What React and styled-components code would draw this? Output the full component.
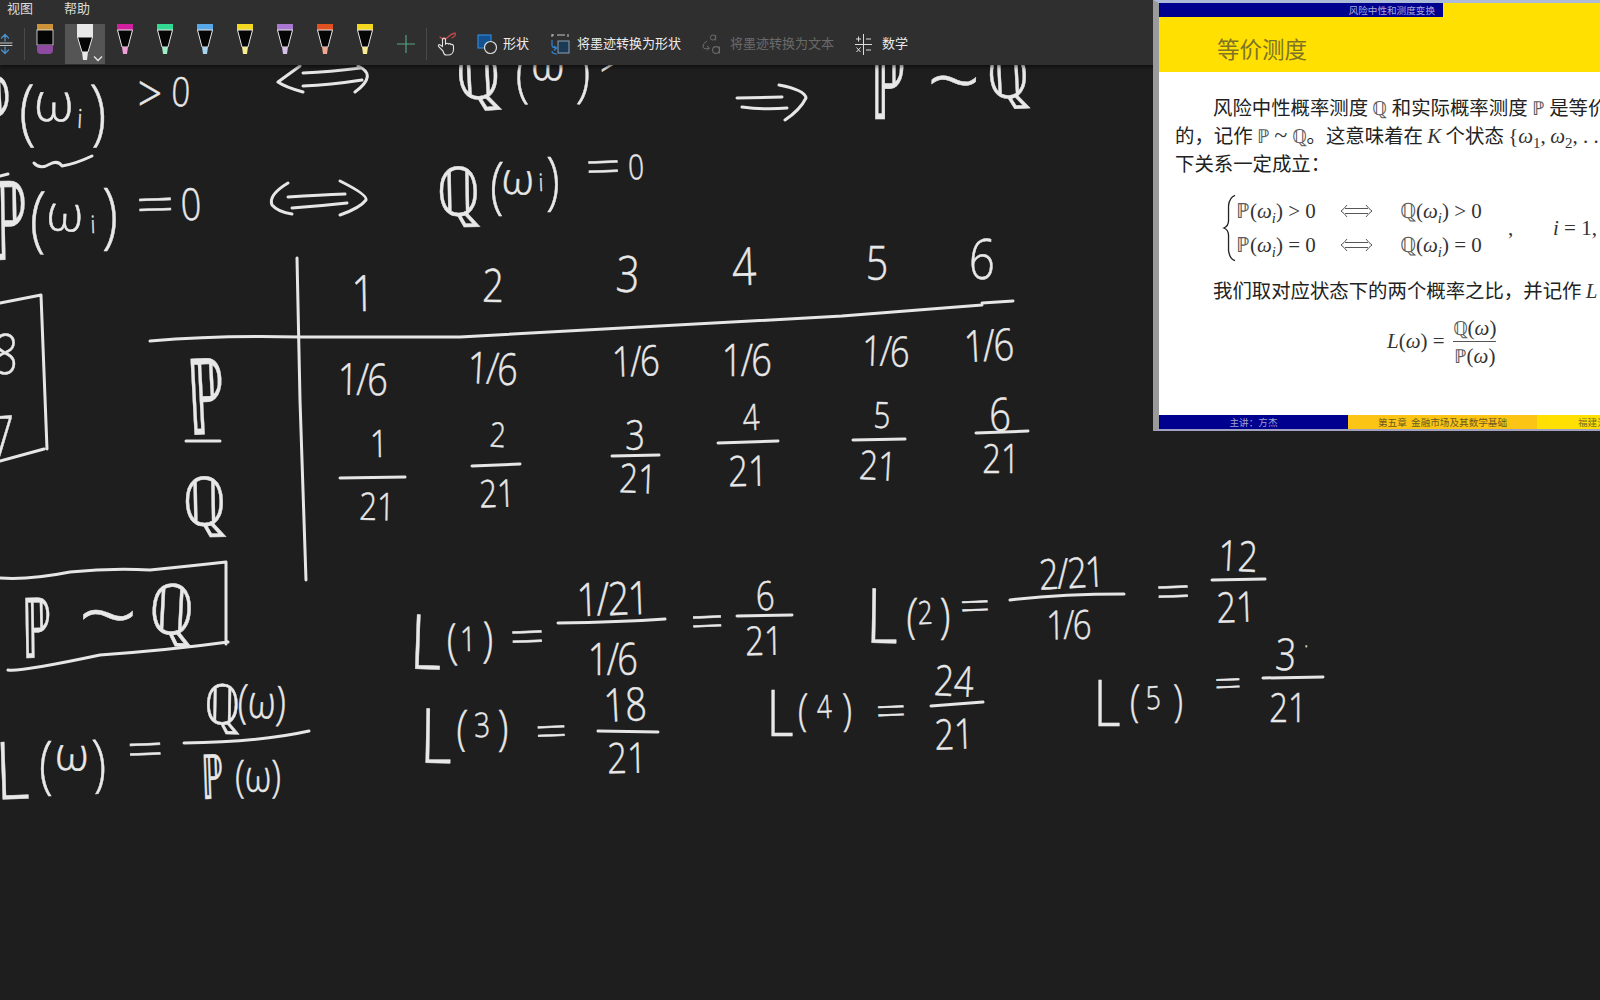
import React from 'react'
import styled, {createGlobalStyle} from 'styled-components'

const GlobalStyle = createGlobalStyle`
    html, body {
        margin: 0;
        padding: 0;
        background: #1e1e1e;
    }
`

const Page = styled.div`
    position: relative;
    width: 1600px;
    height: 1000px;
    overflow: hidden;
    display: flex;
    flex-direction: column;
    background: #1e1e1e;
    font-family: "Noto Sans CJK SC", "Liberation Sans", sans-serif;
`

/* ---------- ribbon ---------- */

const Ribbon = styled.div`
    position: relative;
    z-index: 2;
    height: 65px;
    flex: none;
    background: #2f2f2f;
    box-shadow: 0 2px 4px rgba(0, 0, 0, 0.55);
`

const MenuRow = styled.div`
    display: flex;
    height: 24px;
    padding-left: 7px;
    gap: 31px;
    font-size: 13px;
    line-height: 16px;
    color: #dcdcdc;
`

const ToolRow = styled.div`
    display: flex;
    align-items: center;
    height: 40px;
`

const Slot = styled.div`
    position: relative;
    flex: none;
    width: 40px;
    height: 40px;
    display: flex;
    align-items: flex-start;
    justify-content: center;
    background: ${p => (p.$active ? '#555555' : 'transparent')};
`

const RulerSlot = styled.div`
    flex: none;
    width: 24px;
    height: 32px;
    border-right: 1px solid #4a4a4a;
    display: flex;
    align-items: center;
`

const PlusSlot = styled.div`
    flex: none;
    width: 41px;
    height: 32px;
    border-right: 1px solid #4a4a4a;
    display: flex;
    align-items: center;
    justify-content: center;
`

const HandSlot = styled.div`
    flex: none;
    width: 40px;
    display: flex;
    justify-content: center;
    margin-right: 10px;
`

const ToolButton = styled.div`
    flex: none;
    display: flex;
    align-items: center;
    gap: ${p => p.$gap || 6}px;
    margin-right: ${p => p.$after || 0}px;
    font-size: 13px;
    color: ${p => (p.$off ? '#6a6a6a' : '#ececec')};
    white-space: nowrap;
`

const ToolLabel = styled.span`
    margin-top: -3px;
`

const Chevron = styled.svg`
    position: absolute;
    right: 2px;
    bottom: 2px;
`

function Pen({cap, tip}) {
    return (
        <svg width="18" height="32" viewBox="0 0 18 32">
            <rect x="1" y="0" width="16" height="6" fill={cap} />
            <path d="M1.5 6 L6 23 H12 L16.5 6 Z" fill="#050505" stroke="#e8e8e8" strokeWidth="1" />
            <path d="M6 23 L7 30 H11 L12 23 Z" fill={tip} />
        </svg>
    )
}

const PENS = [
    ['#d020a0', '#f0a0d8'],
    ['#30d890', '#a0ecc8'],
    ['#58a8e8', '#a8d4f0'],
    ['#f4d820', '#f8ec90'],
    ['#a878d0', '#d4c0e8'],
    ['#e05020', '#f0a890'],
    ['#f4d820', '#f8ec90'],
]

function Toolbar() {
    return (
        <Ribbon>
            <MenuRow>
                <span>视图</span>
                <span>帮助</span>
            </MenuRow>
            <ToolRow>
                <RulerSlot>
                    <svg width="14" height="24" viewBox="0 0 14 24" fill="none" strokeLinecap="round">
                        <path d="M5 3 V9 M1.5 6 L5 2.5 L8.5 6 M5 15 V21 M1.5 18 L5 21.5 L8.5 18" stroke="#4a8fc8" strokeWidth="1.3" />
                        <path d="M0 11 H12 M0 13.5 H12" stroke="#c8c8c8" strokeWidth="1" />
                    </svg>
                </RulerSlot>
                <Slot>
                    <svg width="18" height="31" viewBox="0 0 18 31">
                        <rect x="1" y="0" width="16" height="6" fill="#cc9238" />
                        <rect x="1" y="6" width="16" height="15" fill="#050505" stroke="#e8e8e8" strokeWidth="0.8" />
                        <path d="M1 21 H17 V26 Q17 30 13 30 H5 Q1 30 1 26 Z" fill="#8e4a9e" />
                    </svg>
                </Slot>
                <Slot $active>
                    <svg width="18" height="37" viewBox="0 0 18 37">
                        <rect x="1" y="0" width="16" height="13" fill="#e8e8e8" />
                        <path d="M1.5 13 L6 28 H12 L16.5 13 Z" fill="#050505" stroke="#e8e8e8" strokeWidth="1" />
                        <path d="M6 28 L7 36 H11 L12 28 Z" fill="#e8e8e8" />
                    </svg>
                    <Chevron width="10" height="7" viewBox="0 0 10 7" fill="none">
                        <path d="M1 1.5 L5 5.5 L9 1.5" stroke="#e8e8e8" strokeWidth="1.3" />
                    </Chevron>
                </Slot>
                {PENS.map(([cap, tip], i) => (
                    <Slot key={i}>
                        <Pen cap={cap} tip={tip} />
                    </Slot>
                ))}
                <PlusSlot>
                    <svg width="18" height="18" viewBox="0 0 18 18">
                        <path d="M9 0 V18 M0 9 H18" stroke="#58a888" strokeWidth="1.1" />
                    </svg>
                </PlusSlot>
                <HandSlot>
                    <svg width="22" height="24" viewBox="0 0 22 24" fill="none" strokeLinecap="round">
                        <path d="M4 5 Q8 9 12 5 Q15 2 19 1 Q21 3 16 6" stroke="#c04848" strokeWidth="1.3" />
                        <path d="M7 19 L3 15 Q1.5 13 3.5 12.5 L6.5 14.5 V7 Q8 5 9.5 7 V12 Q11 10.5 12.5 12 Q14 11 15 12.5 Q17 12 17.5 14 V18 Q17 23 12 23 H10 Q8 23 7 19 Z" stroke="#e4e4e4" strokeWidth="1.1" />
                    </svg>
                </HandSlot>
                <ToolButton $after={22} $gap={5}>
                    <svg width="21" height="21" viewBox="0 0 21 21">
                        <rect x="1" y="1" width="13" height="13" fill="#14528f" stroke="#2f86d6" strokeWidth="1.2" />
                        <circle cx="13.5" cy="13.5" r="6" fill="#2f2f2f" stroke="#dcdcdc" strokeWidth="1.2" />
                    </svg>
                    <ToolLabel>形状</ToolLabel>
                </ToolButton>
                <ToolButton $after={21} $gap={7}>
                    <svg width="19" height="22" viewBox="0 0 19 22" fill="none">
                        <path d="M1 2 H3 M1 1 V4 M6 2 H14 M17 1 V4" stroke="#c8c8c8" strokeWidth="1" />
                        <rect x="7" y="8" width="11" height="12" fill="#1d3a55" stroke="#8aa0b4" strokeWidth="1" />
                        <path d="M1 7 V12 Q1 15 5 15 M3 13 L5.5 15 L3 17.5 M1 18 Q1 21 6 21" stroke="#2f86d6" strokeWidth="1.2" />
                    </svg>
                    <ToolLabel>将墨迹转换为形状</ToolLabel>
                </ToolButton>
                <ToolButton $off $after={21} $gap={8}>
                    <svg width="20" height="22" viewBox="0 0 20 22" fill="none">
                        <path d="M5 8 Q0 11 1 14 Q2 17 7 15 M5 13 L7.5 15 L5 17.5" stroke="#6a6a6a" strokeWidth="1" />
                        <circle cx="11" cy="4.5" r="2.6" stroke="#6a6a6a" strokeWidth="1" />
                        <path d="M13.6 2 V7.5" stroke="#6a6a6a" strokeWidth="1" />
                        <circle cx="14" cy="17" r="3.4" stroke="#6a6a6a" strokeWidth="1.1" />
                        <path d="M17.4 13.5 V20.5" stroke="#6a6a6a" strokeWidth="1.1" />
                    </svg>
                    <ToolLabel>将墨迹转换为文本</ToolLabel>
                </ToolButton>
                <ToolButton $gap={10}>
                    <svg width="17" height="21" viewBox="0 0 17 21" fill="none">
                        <path d="M8.5 0 V21 M0 10.5 H17" stroke="#dcdcdc" strokeWidth="1" />
                        <path d="M1 5 H6 M3.5 2.5 V7.5 M11 5 H16 M1.5 13.5 L5.5 18 M5.5 13.5 L1.5 18 M11 16 H16" stroke="#dcdcdc" strokeWidth="1" />
                    </svg>
                    <ToolLabel>数学</ToolLabel>
                </ToolButton>
            </ToolRow>
        </Ribbon>
    )
}

/* ---------- whiteboard ---------- */

const Board = styled.div`
    position: relative;
    flex: 1;
    overflow: hidden;
`

/* the canvas keeps page coordinates, the ribbon covers its first 65px */
const Canvas = styled.div`
    position: absolute;
    left: 0;
    top: -65px;
    width: 1600px;
    height: 1000px;
`

const Strokes = styled.svg`
    position: absolute;
    inset: 0;
    fill: none;
    stroke: #e6e6e6;
    stroke-width: 3;
    stroke-linecap: round;
    stroke-linejoin: round;
`

const Ink = styled.span`
    position: absolute;
    left: ${p => p.$x}px;
    top: ${p => p.$y}px;
    transform: translate(-50%, -50%) rotate(${p => p.$r}deg) scaleX(${p => p.$sx});
    font-family: "Open Sans", "DejaVu Sans", sans-serif;
    font-weight: 300;
    -webkit-text-stroke: 0.5px #e8e8e8;
    font-size: ${p => p.$s}px;
    letter-spacing: ${p => p.$track || 0}px;
    line-height: 1;
    color: #e8e8e8;
    white-space: nowrap;
`

const STROKES = [
    // table
    'M297 258 L300 400 L306 580',
    'M150 341 Q220 335 300 337 L460 337 L842 316 M842 316 L982 305 M982 303 L1013 301',
    'M186 441 H220',
    'M340 478 L405 477',
    'M472 466 L520 464',
    'M612 456 L659 455',
    'M718 443 L778 441',
    'M853 440 L905 439',
    'M976 433 L1028 431',
    // boxes
    'M0 303 L41 295 L47 449 M0 461 L44 449',
    'M0 578 Q30 580 70 572 Q110 568 150 570 Q190 566 226 562 L226 644 M8 670 Q20 672 100 655 Q170 650 228 642',
    // marks under the first line
    'M34 163 Q40 170 50 164 Q58 160 62 166 Q75 164 92 156',
    'M0 176 L8 174',
    // arrows
    'M300 66 L278 82 Q285 87 303 92 M303 73 Q330 72 360 68 M303 86 Q330 85 362 80 M358 66 Q378 75 355 92',
    'M288 183 Q268 195 272 205 Q278 212 292 214 M288 197 Q320 195 345 194 M292 208 Q320 206 347 203 M340 181 Q368 195 366 200 Q360 208 340 215',
    'M737 98 L782 97 M742 107 Q765 110 787 108 M779 85 Q805 90 806 98 Q800 110 785 120',
    // fraction bars
    'M184 743 Q260 742 309 731',
    'M558 623 Q620 622 665 619',
    'M737 616 L792 615',
    'M598 731 L658 732',
    'M1010 600 Q1060 594 1124 594',
    'M1212 580 L1265 579',
    'M931 706 L983 702',
    'M1263 678 L1323 677',
]

const INK = [
    // first line
    ['ℙ', -6, 108, 100], ['(', 27, 108, 72], ['ω', 54, 100, 54], ['i', 80, 118, 26], [')', 98, 108, 72],
    ['>', 150, 92, 52], ['0', 181, 91, 40],
    ['ℚ', 478, 72, 70], ['(', 522, 72, 60], ['ω', 548, 62, 46], [')', 584, 72, 60], ['>', 610, 60, 44],
    ['ℙ', 888, 80, 100], ['~', 954, 78, 86], ['ℚ', 1008, 72, 66],
    // second line
    ['ℙ', 8, 217, 110], ['(', 38, 215, 72], ['ω', 65, 212, 50], ['i', 93, 224, 24], [')', 110, 212, 72],
    ['=', 155, 203, 50], ['0', 191, 203, 44],
    ['ℚ', 458, 190, 68], ['(', 497, 182, 62], ['ω', 518, 177, 44], ['i', 541, 182, 24], [')', 553, 178, 62],
    ['=', 603, 165, 46], ['0', 636, 166, 34],
    // table head
    ['1', 363, 292, 50], ['2', 493, 284, 46], ['3', 628, 273, 50], ['4', 744, 265, 52], ['5', 877, 262, 48], ['6', 982, 257, 56],
    ['ℙ', 206, 393, 106], ['ℚ', 204, 500, 68],
    // table rows
    ['1/6', 362, 378, 44], ['1/6', 492, 367, 44], ['1/6', 635, 360, 42], ['1/6', 746, 359, 44], ['1/6', 885, 350, 42], ['1/6', 988, 344, 44],
    ['1', 379, 442, 38], ['21', 377, 505, 38],
    ['2', 498, 434, 34], ['21', 497, 492, 38],
    ['3', 635, 434, 42], ['21', 638, 478, 40],
    ['4', 751, 417, 36], ['21', 748, 470, 42],
    ['5', 882, 415, 36], ['21', 878, 465, 40],
    ['6', 1000, 413, 46], ['21', 1001, 458, 40],
    // boxed
    ['8', 5, 352, 56], ['7', 2, 434, 56],
    ['ℙ', 37, 626, 84], ['~', 108, 612, 96], ['ℚ', 172, 607, 70],
    // L(w)
    ['L', 12, 768, 80], ['(', 46, 762, 62], ['ω', 72, 752, 46], [')', 99, 760, 62], ['=', 145, 748, 48],
    ['ℚ', 222, 702, 56], ['(ω)', 262, 700, 46], ['ℙ', 212, 775, 62], ['(ω)', 258, 775, 44],
    // L(1)
    ['L', 426, 640, 76], ['(', 452, 640, 48], ['1', 468, 638, 34], [')', 488, 638, 48], ['=', 527, 635, 46],
    ['1/21', 612, 597, 46], ['1/6', 612, 658, 44], ['=', 707, 620, 44], ['6', 765, 595, 40], ['21', 764, 640, 40],
    // L(3)
    ['L', 436, 734, 76], ['(', 462, 726, 48], ['3', 482, 724, 34], [')', 503, 726, 48], ['=', 551, 730, 42],
    ['18', 625, 703, 46], ['21', 627, 757, 42],
    // L(2)
    ['L', 882, 614, 76], ['(', 912, 614, 48], ['2', 925, 612, 32], [')', 945, 614, 48], ['=', 975, 605, 40],
    ['2/21', 1071, 572, 42], ['1/6', 1068, 624, 40], ['=', 1173, 590, 46], ['12', 1238, 555, 42], ['21', 1236, 606, 42],
    // L(4)
    ['L', 780, 712, 64], ['(', 803, 708, 44], ['4', 824, 706, 32], [')', 847, 708, 44], ['=', 891, 710, 40],
    ['24', 954, 680, 42], ['21', 954, 733, 42],
    // L(5)
    ['L', 1107, 702, 64], ['(', 1135, 699, 44], ['5', 1153, 697, 32], [')', 1178, 699, 44], ['=', 1228, 683, 36],
    ['3', 1286, 653, 44], ['.', 1306, 640, 18], ['21', 1288, 707, 40],
]

// how wide each kind of handwritten mark runs against the font
const widthOf = t => {
    if (t === 'ℙ') return 0.55
    if (t === '=') return 1.35
    if (t === 'ω') return 1
    if (t === '~') return 1.1
    return 0.82
}

function Whiteboard() {
    return (
        <Board>
            <Canvas>
                <Strokes width="1600" height="1000" viewBox="0 0 1600 1000">
                    {STROKES.map((d, i) => (
                        <path key={i} d={d} />
                    ))}
                </Strokes>
                {INK.map(([t, x, y, s], i) => (
                    <Ink
                        key={i}
                        $x={x}
                        $y={y}
                        $s={s}
                        $sx={widthOf(t)}
                        $r={t === '=' ? -2 : (i * 37) % 7 - 3}
                        $track={t.includes('/') ? -2 : 0}
                    >
                        {t}
                    </Ink>
                ))}
            </Canvas>
        </Board>
    )
}

/* ---------- floating slide ---------- */

const Slide = styled.div`
    position: absolute;
    z-index: 3;
    top: 0;
    left: 1153px;
    width: 447px;
    height: 431px;
    box-sizing: border-box;
    display: flex;
    flex-direction: column;
    overflow: hidden;
    background: #ffffff;
    border-left: 6px solid #9a9a9a;
    border-top: 3px solid #aebbd8;
    border-bottom: 2px solid #a0a0c0;
`

const SlideTop = styled.div`
    flex: none;
    display: flex;
    height: 14px;
    background: #ffe000;
`

const SectionTab = styled.div`
    width: 284px;
    display: flex;
    justify-content: flex-end;
    padding-right: 8px;
    box-sizing: border-box;
    background: #00008f;
    color: #a8a8d8;
    font-size: 9.6px;
    line-height: 14px;
`

const TitleBand = styled.div`
    flex: none;
    height: 55px;
    padding-left: 58px;
    background: #ffe000;
    color: #7d7328;
    font-size: 22.5px;
    line-height: 62px;
`

const SlideBody = styled.div`
    flex: 1;
    min-height: 0;
    padding: 21px 0 0 16px;
    color: #222222;
    font-size: 19.4px;
    line-height: 28px;
`

const Line = styled.div`
    height: 28px;
    white-space: nowrap;
    text-indent: ${p => (p.$indent ? 38 : 0)}px;
    margin-top: ${p => p.$top || 0}px;
`

const Bb = styled.span`
    font-family: "DejaVu Sans", sans-serif;
    font-size: 1em;
    font-weight: 200;
    color: #5a5a5a;
`

const M = styled.span`
    font-family: "Liberation Serif", serif;
    font-style: ${p => (p.$up ? 'normal' : 'italic')};
    font-size: ${p => p.$s || 21}px;
    color: #333333;
`

const Cases = styled.div`
    display: flex;
    align-items: center;
    margin: 16px 0 0 47px;
    height: 70px;
`

const Brace = styled.svg`
    flex: none;
`

const CaseGrid = styled.div`
    flex: none;
    display: grid;
    grid-template-columns: 104px 60px 108px 45px 60px;
    grid-auto-rows: 34px;
    font-family: "Liberation Serif", serif;
    font-size: 21px;
    line-height: 34px;
    color: #333333;
    white-space: nowrap;
`

const ArrowCell = styled.div`
    display: flex;
    align-items: center;
    height: 34px;
`

const CommaCell = styled.div`
    grid-row: 1 / span 2;
    grid-column: 4;
    line-height: 68px;
`

const IndexCell = styled.div`
    grid-row: 1 / span 2;
    grid-column: 5;
    line-height: 68px;
    font-size: 21px;
`

const Formula = styled.div`
    display: flex;
    align-items: center;
    gap: 8px;
    margin: 11px 0 0 212px;
    height: 52px;
`

const Fraction = styled.div`
    display: flex;
    flex-direction: column;
    align-items: center;
    line-height: 25px;
    & > :first-child {
        border-bottom: 1px solid #555555;
    }
`

const Sub = styled.sub`
    font-size: 0.7em;
    line-height: 0;
`

const Footer = styled.div`
    flex: none;
    display: flex;
    height: 14px;
    font-size: 9.6px;
    line-height: 14px;
    text-align: center;
    white-space: nowrap;
`

const FootCell = styled.div`
    flex: none;
    width: ${p => p.$w}px;
    background: ${p => p.$bg};
    color: ${p => p.$fg};
    padding-left: ${p => p.$pad || 0}px;
    box-sizing: border-box;
    text-align: ${p => (p.$pad ? 'left' : 'center')};
`

const P = ({row, op, zero}) => (
    <div>
        <Bb>{row}</Bb>(<i>ω</i>
        <Sub>
            <i>i</i>
        </Sub>
        ) {op} {zero}
    </div>
)

const Iff = () => (
    <ArrowCell>
        <svg width="33" height="14" viewBox="0 0 33 14" fill="none" stroke="#444444" strokeWidth="0.9">
            <path d="M5 4.5 H28 M5 9.5 H28 M7 1 Q4 5 1 7 Q4 9 7 13 M26 1 Q29 5 32 7 Q29 9 26 13" />
        </svg>
    </ArrowCell>
)

function SlidePanel() {
    return (
        <Slide>
            <SlideTop>
                <SectionTab>风险中性和测度变换</SectionTab>
            </SlideTop>
            <TitleBand>等价测度</TitleBand>
            <SlideBody>
                <Line $indent>
                    风险中性概率测度 <Bb>ℚ</Bb> 和实际概率测度 <Bb>ℙ</Bb> 是等价的
                </Line>
                <Line>
                    的，记作 <Bb>ℙ</Bb> <M $up $s={24}>~</M> <Bb>ℚ</Bb>。这意味着在 <M>K</M> 个状态 <M $up>{'{'}</M>
                    <M>ω</M>
                    <Sub>
                        <M $up $s={15}>1</M>
                    </Sub>
                    <M $up>,</M> <M>ω</M>
                    <Sub>
                        <M $up $s={15}>2</M>
                    </Sub>
                    <M $up>, . . .</M>
                </Line>
                <Line>下关系一定成立：</Line>
                <Cases>
                    <Brace width="14" height="72" viewBox="0 0 15 72" fill="none">
                        <path d="M14 1 Q8 3 7 12 V28 Q7 34 2 36 Q7 38 7 44 V60 Q8 69 14 71" stroke="#222222" strokeWidth="1.4" />
                    </Brace>
                    <CaseGrid>
                        <P row="ℙ" op=">" zero="0" />
                        <Iff />
                        <P row="ℚ" op=">" zero="0" />
                        <CommaCell>,</CommaCell>
                        <IndexCell>
                            <i>i</i> = 1,
                        </IndexCell>
                        <P row="ℙ" op="=" zero="0" />
                        <Iff />
                        <P row="ℚ" op="=" zero="0" />
                    </CaseGrid>
                </Cases>
                <Line $indent $top={13}>
                    我们取对应状态下的两个概率之比，并记作 <M>L</M>
                </Line>
                <Formula>
                    <M>
                        L<M $up>(</M>ω<M $up>) =</M>
                    </M>
                    <Fraction>
                        <div>
                            <Bb>ℚ</Bb>
                            <M $up>
                                (<i>ω</i>)
                            </M>
                        </div>
                        <div>
                            <Bb>ℙ</Bb>
                            <M $up>
                                (<i>ω</i>)
                            </M>
                        </div>
                    </Fraction>
                </Formula>
            </SlideBody>
            <Footer>
                <FootCell $w={189} $bg="#00008f" $fg="#a0a0d0">主讲：方杰</FootCell>
                <FootCell $w={189} $bg="#fcc415" $fg="#6a5a20">第五章&nbsp;&nbsp;金融市场及其数学基础</FootCell>
                <FootCell $w={63} $bg="#ffe000" $fg="#7a6f20" $pad={41}>福建江夏学院</FootCell>
            </Footer>
        </Slide>
    )
}

export default function App() {
    return (
        <Page>
            <GlobalStyle />
            <Toolbar />
            <Whiteboard />
            <SlidePanel />
        </Page>
    )
}
